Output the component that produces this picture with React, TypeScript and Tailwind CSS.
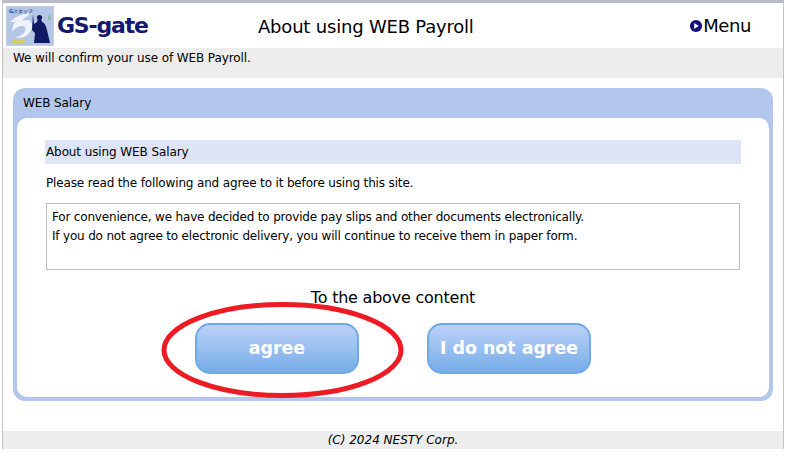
const font = { fontFamily: '"DejaVu Sans", Verdana, sans-serif' }

function Logo() {
  return (
    <svg width="48" height="40" viewBox="0 0 48 40" className="shrink-0">
      <rect width="48" height="40" fill="#b4c6e6" />
      <rect x="0.5" y="0.5" width="47" height="39" fill="none" stroke="#c9cfdb" />
      <path d="M4 16c6-6 14-9 22-9-4 2-8 5-10 8 5-2 9-1 10 3 1 5-3 11-8 13-3 1-7 1-10 0 4 0 9-2 11-6 1-3 0-5-3-5-4 0-8 3-10 6 0-4 1-7 3-10z" fill="#eef2fa" />
      <path d="M27 8l1 10 3-2 1-3h3l1 3c3 1 4 4 5 8l3 13H28l1-10-3-3z" fill="#0f1a63" />
      <circle cx="33.5" cy="11.5" r="2.6" fill="#0f1a63" />
      <path d="M42 12l1.5-4 1.5 4-1.5 3z" fill="#8eb59a" />
      <text x="3" y="7" fontSize="5" fontWeight="700" fill="#2b4a7c" style={font}>Gスタッフ</text>
      <rect x="6" y="34" width="13" height="3" rx="1" fill="#d5cc5e" />
    </svg>
  )
}

function ActionButton({ label }: { label: string }) {
  return (
    <button className="h-[51px] w-[164px] rounded-[15px] border-2 border-[#6fa9ea] bg-gradient-to-b from-[#bcd1f8] to-[#75ade8] text-[17.4px] font-bold leading-none text-white">
      {label}
    </button>
  )
}

export default function App() {
  return (
    <div className="relative h-[459px] w-[785px] overflow-hidden bg-white text-black" style={font}>
      <div className="ml-[2px] mr-[1px] flex h-[449px] flex-col border-x border-t-[3px] border-[#b9bcc6] border-l-[#c4c4c4] border-r-[#c4c4c4]">
        <header className="flex h-[45px] items-center pl-[3px]">
          <Logo />
          <div className="ml-[3px] w-[100px] text-[22px] font-bold leading-none tracking-[-1.2px] text-[#14186e]">
            GS-gate
          </div>
          <h1 className="ml-[101px] mt-[3px] text-[18px] font-normal leading-none tracking-[-0.2px]">About using WEB Payroll</h1>
          <div className="ml-auto mr-[32px] flex items-center text-[18px] leading-none tracking-[-0.4px]">
            <svg width="14" height="14" viewBox="0 0 15 15">
              <circle cx="7.5" cy="7.5" r="6.5" fill="#10107a" />
              <path d="M5.5 4.2l5 3.3-5 3.3z" fill="#fff" />
            </svg>
            Menu
          </div>
        </header>

        <div className="h-[30px] bg-[#ededed] pl-[10px] text-xs leading-[20px] tracking-[-0.1px]">We will confirm your use of WEB Payroll.</div>

        <main className="flex-1 px-[10px] pt-[10px]">
          <section className="h-[313px] w-[760px] rounded-[12px] bg-[#b3c7ec] px-[4px] pb-[4px]">
            <div className="h-[30px] pl-[6px] text-xs leading-[30px] tracking-[-0.1px]">WEB Salary</div>
            <div className="h-[279px] rounded-[10px] bg-white px-[28px] pt-[22px]">
              <h2 className="h-[24px] w-[696px] bg-[#dce4f6] pl-px text-xs font-normal leading-[24px] tracking-[-0.1px]">About using WEB Salary</h2>
              <p className="mt-[11px] pl-px text-xs leading-[16px] tracking-[-0.15px]">Please read the following and agree to it before using this site.</p>
              <div className="ml-px mt-[12px] h-[67px] w-[694px] border border-[#bcbcbc] px-[5px] pt-[4px] text-xs leading-[19px] tracking-[-0.18px]">
                For convenience, we have decided to provide pay slips and other documents electronically.
                <br />
                If you do not agree to electronic delivery, you will continue to receive them in paper form.
              </div>
              <p className="mt-[18px] text-center text-[16px] leading-[20px] tracking-[-0.22px]">To the above content</p>
              <div className="ml-[150px] mt-[15px] flex gap-[68px]">
                <ActionButton label="agree" />
                <ActionButton label="I do not agree" />
              </div>
            </div>
          </section>
        </main>

        <footer className="h-[18px] bg-[#ededed] text-center text-xs italic leading-[18px]">(C) 2024 NESTY Corp.</footer>
      </div>

      <svg width="250" height="104" viewBox="0 0 250 104" className="pointer-events-none absolute left-[158px] top-[298px]">
        <ellipse cx="124.5" cy="52" rx="118.5" ry="45.5" fill="none" stroke="#ed1c24" strokeWidth="5" />
      </svg>
    </div>
  )
}
